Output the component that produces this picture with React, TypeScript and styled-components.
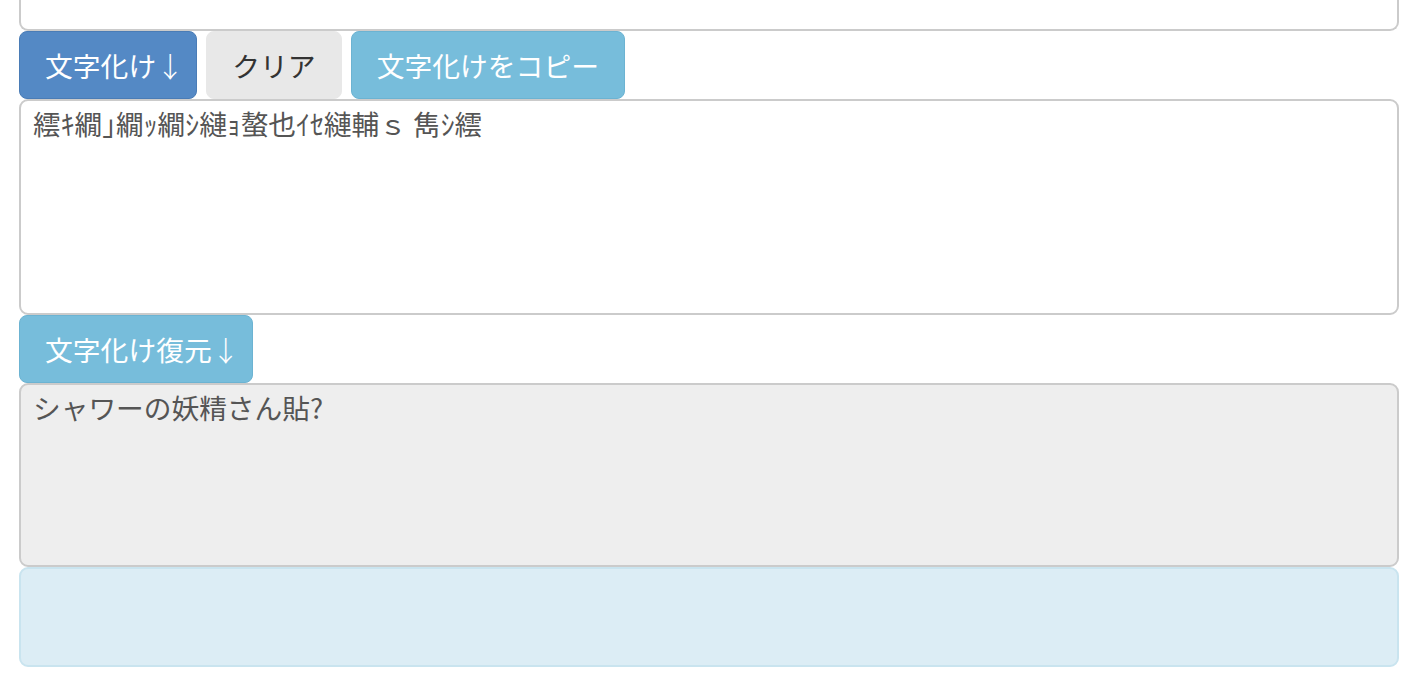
import styled, { createGlobalStyle } from 'styled-components';

const GlobalStyle = createGlobalStyle`
  html, body {
    margin: 0;
    padding: 0;
    background: #fff;
  }
  body {
    font-family: "Noto Sans CJK JP", "Noto Sans", sans-serif;
    color: #555;
  }
`;

type Variant = 'primary' | 'default' | 'info';

const buttonColors: Record<Variant, { bg: string; border: string; color: string }> = {
  primary: { bg: '#5489c5', border: '#4a7cb6', color: '#fff' },
  default: { bg: '#e8e8e8', border: '#e8e8e8', color: '#333' },
  info: { bg: '#77bddb', border: '#6cb3d2', color: '#fff' },
};

const Page = styled.div`
  display: flex;
  flex-direction: column;
  padding: 0 18px 0 19px;
  height: 676px;
  overflow: hidden;
`;

const TextBox = styled.div<{ $height: number; $readonly?: boolean; $cut?: boolean }>`
  box-sizing: border-box;
  flex: none;
  height: ${(p) => p.$height}px;
  border: 2px solid #cbcbcb;
  border-top-width: ${(p) => (p.$cut ? 0 : 2)}px;
  border-radius: ${(p) => (p.$cut ? '0 0 9px 9px' : '9px')};
  background: ${(p) => (p.$readonly ? '#eeeeee' : '#fff')};
  padding: 2px 12px;
  font-size: 27.7px;
  line-height: 40px;
  color: #555;
  white-space: pre-wrap;
`;

const ButtonRow = styled.div`
  display: flex;
  flex: none;
  gap: 9px;
`;

const Button = styled.button<{ $variant: Variant }>`
  box-sizing: border-box;
  height: 68px;
  padding: 0 25px;
  font-family: "Noto Sans CJK JP", "Noto Sans", sans-serif;
  font-size: 27.8px;
  color: ${(p) => buttonColors[p.$variant].color};
  background: ${(p) => buttonColors[p.$variant].bg};
  border: 1px solid ${(p) => buttonColors[p.$variant].border};
  border-radius: 8px;
  white-space: nowrap;
`;

const Arrow = styled.span`
  margin-right: -12.8px;
  font-weight: 300;
`;

const Alert = styled.div`
  box-sizing: border-box;
  flex: none;
  height: 100px;
  background: #dcedf5;
  border: 2px solid #c9e4ef;
  border-radius: 9px;
`;

export default function App() {
  return (
    <>
      <GlobalStyle />
      <Page>
        <TextBox $height={31} $cut />
        <ButtonRow>
          <Button $variant="primary">
            文字化け<Arrow>↓</Arrow>
          </Button>
          <Button $variant="default">クリア</Button>
          <Button $variant="info">文字化けをコピー</Button>
        </ButtonRow>
        <TextBox $height={216}>繧ｷ繝｣繝ｯ繝ｼ縺ｮ螯也ｲｾ縺輔ｓ 雋ｼ繧</TextBox>
        <ButtonRow>
          <Button $variant="info">
            文字化け復元<Arrow>↓</Arrow>
          </Button>
        </ButtonRow>
        <TextBox $height={184} $readonly>
          シャワーの妖精さん貼?
        </TextBox>
        <Alert />
      </Page>
    </>
  );
}
